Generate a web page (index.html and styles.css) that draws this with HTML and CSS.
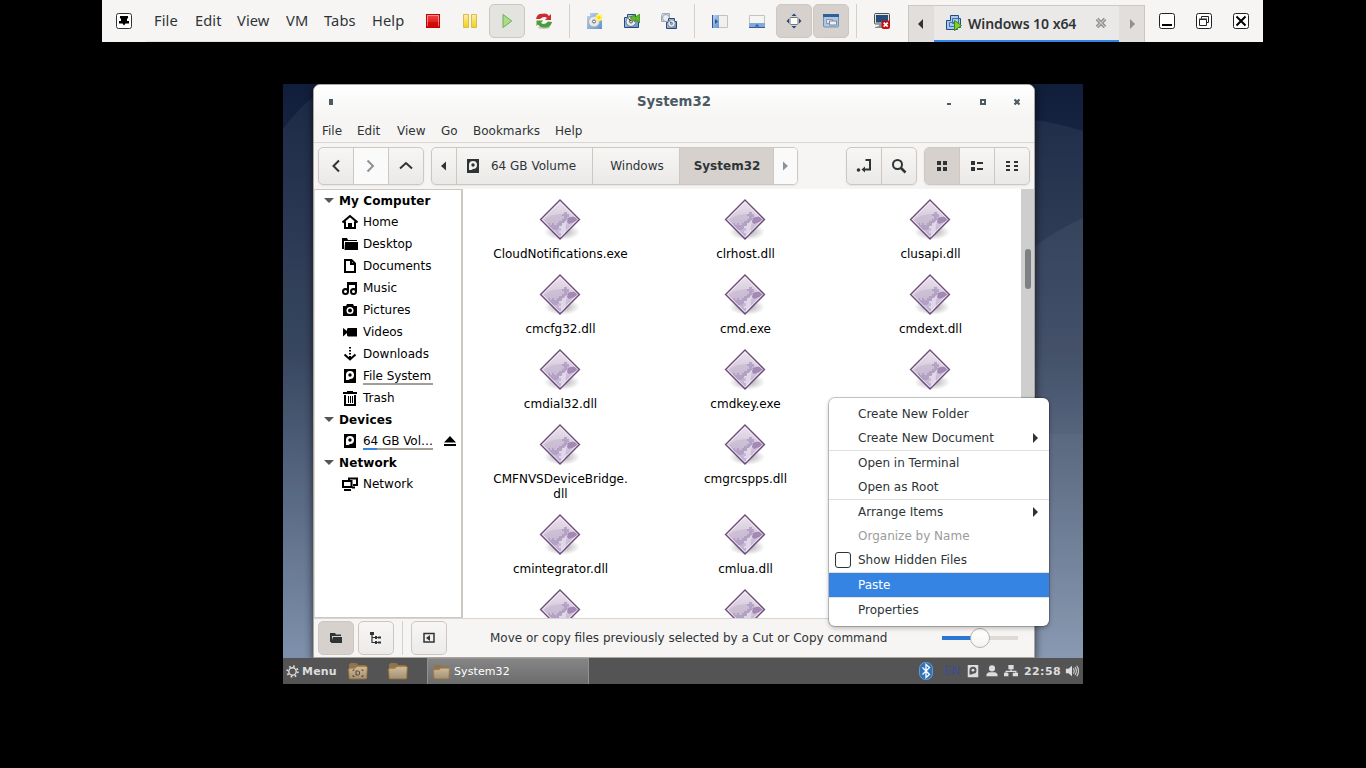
FILE: index.html
```
<!DOCTYPE html>
<html lang="en">
<head>
<meta charset="utf-8">
<title>Windows 10 x64</title>
<link rel="stylesheet" href="styles.css">
</head>
<body>
<svg class="defs" width="0" height="0">
  <defs>
    <linearGradient id="lilac" x1="0" y1="0" x2="0" y2="1"><stop offset="0" stop-color="#ece4ee"/><stop offset=".55" stop-color="#d3c6da"/><stop offset="1" stop-color="#b9abd3"/></linearGradient>
    <linearGradient id="blue" x1="0" y1="0" x2="1" y2="1"><stop offset="0" stop-color="#c4d7ec"/><stop offset="1" stop-color="#5f91cc"/></linearGradient>
    <linearGradient id="red" x1="0" y1="0" x2="0" y2="1"><stop offset="0" stop-color="#f04848"/><stop offset="1" stop-color="#cf0808"/></linearGradient>
    <linearGradient id="gold" x1="0" y1="0" x2="0" y2="1"><stop offset="0" stop-color="#fff0a0"/><stop offset="1" stop-color="#f2cf16"/></linearGradient>
    <linearGradient id="tan" x1="0" y1="0" x2="0" y2="1"><stop offset="0" stop-color="#cdbb9c"/><stop offset="1" stop-color="#a39175"/></linearGradient>
    <radialGradient id="shade"><stop offset="0" stop-color="#000" stop-opacity=".35"/><stop offset="1" stop-color="#000" stop-opacity="0"/></radialGradient>
    <clipPath id="dia"><path d="M22 2 40.500 20.500 22 39 3.500 20.500z"/></clipPath>
  </defs>
  <symbol id="exe" viewBox="0 0 44 44">
    <ellipse cx="24" cy="33" rx="18" ry="8" fill="url(#shade)"/>
    <path d="M22 1 41.500 20.500 22 40 2.500 20.500z" fill="url(#lilac)" stroke="#6d4a78" stroke-width="1.300"/>
    <g clip-path="url(#dia)">
      <path d="M6 21Q14 14 26 15l6 3-8 8H10z" fill="#c5b7cf" opacity=".6"/>
      <path d="M10 24h2v2h2v-2h2v2h3v-2h2v-2h3v-2h2v-3h-2v-2h2v-2h3v2h2v3h-2v3l-3 3-3 3-4 4h-7z" fill="#ab98bf" opacity=".75"/>
      <path d="M30 19q4-2 8-1l4 3-11 4q-4-3-1-6z" fill="#997fae" opacity=".85"/>
      <path d="M23 38v-4h-2v-2h2v-3h-2v-2h3v-3h2q2-3 4-4-3 6-2 12l-3 6z" fill="#e2d9ea" opacity=".9"/>
    </g>
    <path d="M22 3 39.500 20.500 22 38 4.500 20.500z" fill="none" stroke="#fff" stroke-opacity=".55"/>
  </symbol>
  <symbol id="drive" viewBox="0 0 16 16"><path fill="currentColor" fill-rule="evenodd" d="M2 1h12v14H2zM8 3a4 4 0 0 0-4 4v5h2.500L8 11a4 4 0 0 0 0-8z"/><circle cx="8" cy="7" r="1.700" fill="currentColor"/></symbol>
  <symbol id="folderb" viewBox="0 0 16 16"><path fill="currentColor" d="M0 2h5l1 2h9v1H2v8H0zM3 6h13v8H2.500z"/></symbol>
  <symbol id="tanfolder" viewBox="0 0 20 18"><path d="M1.500 15V3q0-1.500 1.500-1.500h5.500L10 3.500h7.500v4z" fill="#8b7558" stroke="#987039"/><path d="M.7 7.500q0-1.200 1.200-1.200h5L9 4.500h9.200q1 0 1 1l-.6 10.300q0 1-1 1H2.200q-1 0-1-1z" fill="url(#tan)" stroke="#b07c34" stroke-width=".9"/></symbol>
  <symbol id="dial" viewBox="0 0 12 12"><circle cx="6" cy="6" r="5" fill="#e7ebee" stroke="#69727c"/><circle cx="6" cy="6" r="1.500" fill="#fff" stroke="#333" stroke-width=".8"/><path d="M6 6 3.500 3" stroke="#222"/></symbol>
</svg>

<header class="vmbar">
  <svg class="pin" viewBox="0 0 16 16"><rect x=".5" y=".5" width="15" height="15" rx="2" fill="#fff" stroke="#333"/><path d="M4 3h8v2.500H11V8h2v2.500H9.500L8 12.500 6.500 10.500H3V8h2V5.500H4z"/></svg>
  <nav class="vmmenu"><span class="w41">File</span><span class="w42">Edit</span><span class="w49">View</span><span class="w38">VM</span><span class="w48">Tabs</span><span>Help</span></nav>
  <div class="group">
    <span class="slot"><svg viewBox="0 0 16 16"><rect x="1.500" y="1.500" width="13" height="13" fill="url(#red)" stroke="#c40404"/><path d="M2.500 13V2.500H13.500V13" fill="none" stroke="#ff8c8c"/><path d="M2.500 9h11v4.500h-11z" fill="#c80000" opacity=".55"/></svg></span>
    <span class="slot"><svg viewBox="0 0 16 16"><path d="M1.500 1.500h5v13h-5zM9.500 1.500h5v13h-5z" fill="url(#gold)" stroke="#d9bd4a"/></svg></span>
    <span class="slot run"><svg viewBox="0 0 16 16"><path d="M4 1.500 12.800 8 4 14.500z" fill="#aedb85" stroke="#6fae57"/></svg></span>
    <span class="slot"><svg viewBox="0 0 16 16"><ellipse cx="8" cy="14.500" rx="6" ry="1.500" fill="#0003"/><path d="M0 6Q1 0 7 .7 11 0 13 3l2-2v6H9l2-2Q8 2.500 4 6z" fill="#cf2a30"/><path d="M16 9q-1 6-8 5.500-4 0-6-3L.5 13V7.500H7L5 10q4 2.500 7-1.500z" fill="#4a9d3b"/></svg></span>
  </div>
  <i class="sep"></i>
  <div class="group">
    <span class="slot"><svg viewBox="0 0 16 16"><path d="M3 0h8v3h4v13H0V3h3z" fill="url(#blue)"/><circle cx="7" cy="8.500" r="5.500" fill="#e4e8ea" stroke="#a3abb3"/><circle cx="7" cy="8.500" r="1.500" fill="#fff" stroke="#444" stroke-width=".8"/><circle cx="12" cy="4.500" r="3.500" fill="#fff36a"/><circle cx="12" cy="4.500" r="1.600" fill="#ffd900"/></svg></span>
    <span class="slot"><svg viewBox="0 0 16 16"><path d="M3.500 1.500h8v3h3v10h-14v-10h3z" fill="url(#blue)" stroke="#204a87"/><use href="#dial" x="1" y="2.500" width="12" height="12"/><path d="M6 5 11 1v3l5-3v9l-5-3v2z" fill="#5db52d" stroke="#347c16" stroke-width=".6"/></svg></span>
    <span class="slot"><svg viewBox="0 0 16 16"><path d="M1.500.5h7v8h-8v-6z" fill="#d7e1ec" stroke="#9bacbf"/><circle cx="5" cy="5" r="3.500" fill="#eceff1" stroke="#99a1aa"/><path d="M7.500 5.500h6v3h2v7h-10v-6h2z" fill="url(#blue)" stroke="#204a87"/><use href="#dial" x="6" y="6" width="9" height="9"/></svg></span>
  </div>
  <i class="sep"></i>
  <div class="group">
    <span class="slot"><svg viewBox="0 0 16 16"><path d="M.5 2.500h15v12H.5z" fill="#f0f0ee" stroke="#c2c2bf"/><path d="M0 2h7v13H0z" fill="url(#blue)"/><path d="M0 2h1v13H0zM3 6l3 2.500L3 11z" fill="#27569b"/></svg></span>
    <span class="slot"><svg viewBox="0 0 16 16"><path d="M.5 2.500h15v12H.5z" fill="#f5f5f3" stroke="#c2c2bf"/><path d="M0 10h16v5H0z" fill="#83a9d6"/><path d="M0 14h16v1H0zM5.500 13.500 8 11l2.500 2.500z" fill="#315f9f"/></svg></span>
    <span class="slot on"><svg viewBox="0 0 16 16"><rect x="4" y="4.500" width="8" height="7" rx="1" fill="#fff" stroke="#777"/><path d="M5.500 3 8 .5 10.500 3zM5.500 13 8 15.500 10.500 13zM3 5.500.5 8 3 10.500zM13 5.500 15.500 8 13 10.500z" fill="#204a87"/></svg></span>
    <span class="slot on"><svg viewBox="0 0 16 16"><rect x=".5" y="1.500" width="15" height="12.500" rx="1" fill="#abc7e5" stroke="#6f8fb5"/><path d="M0 1h16v3H0z" fill="#315f99"/><path d="M3.500 6.500h6v4h-6z" fill="#dde5ed" stroke="#8d9aa8"/><path d="M6.500 8h7v4h-7z" fill="#eef1f4" stroke="#7c8792"/></svg></span>
  </div>
  <i class="sep"></i>
  <div class="group"><span class="slot"><svg viewBox="0 0 16 16"><rect x=".5" y=".5" width="15" height="10.500" rx="1" fill="#e0e2db" stroke="#4d524d"/><path d="M2 2h12v7.500H2z" fill="#274b7d"/><path d="M5 11h4v2h3v2H1v-1l4-1z" fill="#8a8f88"/><rect x="7.500" y="7.500" width="8.500" height="8.500" rx="2" fill="#c50b12"/><path d="M9.700 9.700l4 4M13.700 9.700l-4 4" stroke="#fff" stroke-width="1.700"/></svg></span></div>
  <div class="tabs">
    <span class="arrow"><svg viewBox="0 0 26 36"><path d="M9 18l5-5v10z" fill="#2e3436"/></svg></span>
    <div class="tab">
      <svg viewBox="0 0 16 16"><path d="M4.500.5h8v3h2v9h-3v2h-11v-9h4z" fill="#a9c9ec" stroke="#204a87"/><path d="M3.500 7.500h7v4h-7zM6.500 3.500h6v5h-6z" fill="none" stroke="#3f71ad"/><path d="M8.500 5.500 15.500 10.500 8.500 15.500z" fill="#80cf2a" stroke="#3c8d0b"/></svg>
      <b>Windows 10 x64</b>
      <svg class="tabx" viewBox="0 0 12 12"><path d="M2 2l8 8M10 2l-8 8" stroke="#858884" stroke-width="3.600"/><path d="M2 2l8 8M10 2l-8 8" stroke="#c9c8c4" stroke-width="1.200"/></svg>
    </div>
    <span class="arrow"><svg viewBox="0 0 26 36"><path d="M11 13l5 5-5 5z" fill="#8d9091"/></svg></span>
  </div>
  <div class="group wins">
    <span class="slot"><svg viewBox="0 0 16 16"><rect x=".5" y=".5" width="15" height="15" rx="2" fill="#fff" stroke="#222"/><path d="M3 11h10v2H3z"/></svg></span>
    <span class="slot"><svg viewBox="0 0 16 16"><rect x=".5" y=".5" width="15" height="15" rx="2" fill="#fff" stroke="#222"/><path d="M5.500 5.500v-2h7v6h-2M3.500 6.500h7v6h-7zM3 6h8" fill="none" stroke="#222"/></svg></span>
    <span class="slot"><svg viewBox="0 0 16 16"><rect x=".5" y=".5" width="15" height="15" rx="2" fill="#fff" stroke="#222"/><path d="M3.500 3.500l9 9M12.500 3.500l-9 9" stroke="#000" stroke-width="2"/></svg></span>
  </div>
</header>

<main class="desktop">
  <svg class="wall" viewBox="0 0 800 574" preserveAspectRatio="none"><path d="M0 45Q15 25 31 12V574H0z" fill="#fff" opacity=".05"/><path d="M751 36Q775 39 800 47V574H751z" fill="#fff" opacity=".06"/><path d="M751 163Q775 145 800 134V574H751z" fill="#fff" opacity=".05"/><path d="M751 350h49v224H751z" fill="#fff" opacity=".03"/></svg>
  <section class="win">
    <div class="title"><i class="mini"></i><b>System32</b>
      <svg class="ctl" viewBox="0 0 76 12"><path d="M3 7h4v2H3z" fill="#4c5a63"/><path d="M37 4h4v4h-4z" fill="none" stroke="#4c5a63" stroke-width="2"/><path d="M70.500 3.500l5 5M75.500 3.500l-5 5" stroke="#4c5a63" stroke-width="2.200"/></svg>
    </div>
    <nav class="menubar"><span class="m1">File</span><span class="m2">Edit</span><span class="m3">View</span><span class="m4">Go</span><span class="m5">Bookmarks</span><span>Help</span></nav>
    <div class="tools">
      <div class="btns"><span class="b35"><svg viewBox="0 0 16 16"><path d="M11 2.500 5.500 8l5.500 5.500" class="ln"/></svg></span><span class="b35 off"><svg viewBox="0 0 16 16"><path d="M4.500 2.500 10 8l-5.500 5.500" class="ln grey"/></svg></span><span class="b35"><svg viewBox="0 0 16 16"><path d="M2 10.500 8 5l6 5.500" class="ln"/></svg></span></div>
      <div class="btns path"><span class="p1"><svg viewBox="0 0 16 16"><path d="M5 8l5-4.500v9z" fill="#2e3436"/></svg></span><span class="p2"><svg viewBox="0 0 16 16"><use href="#drive"/></svg><em>64 GB Volume</em></span><span class="p3">Windows</span><span class="p4 sel"><b>System32</b></span><span class="p5 off"><svg viewBox="0 0 16 16"><path d="M5 3.500l5 4.500-5 4.500z" fill="#8f9293"/></svg></span></div>
      <div class="btns right"><span class="b34"><svg viewBox="0 0 16 16"><path d="M9.500 2H14v9.500H9" class="ln"/><path d="M5.500 11.500 9 8.500v6z" fill="#2e3436"/><circle cx="2.500" cy="12" r="1.800" fill="#2e3436"/></svg></span><span class="b35"><svg viewBox="0 0 16 16"><circle cx="6.500" cy="6.500" r="4.500" class="ln"/><path d="M10 10l4.500 4.500" class="ln thick"/></svg></span></div>
      <div class="btns views"><span class="b35 sel"><svg viewBox="0 0 16 16"><path d="M3 3h4v4H3zM9 3h4v4H9zM3 9h4v4H3zM9 9h4v4H9z" fill="#2e3436"/></svg></span><span class="b35"><svg viewBox="0 0 16 16"><path d="M2 3h4v4H2zM2 9h4v4H2zM8 4h6v2H8zM8 10h6v2H8z" fill="#2e3436"/></svg></span><span class="b35"><svg viewBox="0 0 16 16"><path d="M2 3h4v2H2zM2 7h4v2H2zM2 11h4v2H2zM10 3h4v2h-4zM10 7h4v2h-4zM10 11h4v2h-4z" fill="#2e3436"/></svg></span></div>
    </div>
    <div class="body">
      <aside class="side">
        <h3>My Computer</h3>
        <p><svg viewBox="0 0 16 16"><path d="M.5 8.500 8 2l7.500 6.500M3 7.500V14h10V7.500" fill="none" stroke="#000" stroke-width="2"/><path d="M6 9h4v5H6z"/></svg>Home</p>
        <p><svg viewBox="0 0 16 16"><use href="#folderb"/></svg>Desktop</p>
        <p><svg viewBox="0 0 16 16"><path d="M3 2h6.500L13 5.500V14H3zM9 2v4h4" fill="none" stroke="#000" stroke-width="2"/></svg>Documents</p>
        <p><svg viewBox="0 0 16 16"><path d="M6 11V3h8v8" fill="none" stroke="#000" stroke-width="2"/><path d="M6 4h8v1H6z"/><circle cx="3.500" cy="11.500" r="2.500" fill="none" stroke="#000" stroke-width="2"/><circle cx="11.500" cy="11.500" r="2.500" fill="none" stroke="#000" stroke-width="2"/></svg>Music</p>
        <p><svg viewBox="0 0 16 16"><path fill-rule="evenodd" d="M1 4h3l1-2h6l1 2h3v10H1zM8 5a3.500 3.500 0 1 0 0 7 3.500 3.500 0 0 0 0-7z"/><circle cx="8" cy="8.500" r="2"/></svg>Pictures</p>
        <p><svg viewBox="0 0 16 16"><path d="M1 4l4 3V5l1-1h9v8.500H6l-1-1V9l-4 3.500z"/></svg>Videos</p>
        <p><svg viewBox="0 0 16 16"><path d="M7 1h2v1.500H7zM7 4h2v1.500H7zM7 7h2v1.500H7z"/><path d="M8 10v4M2.500 8.500 8 13.500l5.500-5" fill="none" stroke="#000" stroke-width="2"/></svg>Downloads</p>
        <p><svg viewBox="0 0 16 16"><use href="#drive"/></svg><u>File System</u></p>
        <p><svg viewBox="0 0 16 16"><path d="M1 2h4V1h6v1h4v2H1zM2 5h2v9h8V5h2v11H2zM6 6h1v7H6zM8 6h1v7H8zM10 6h1v7h-1z"/></svg>Trash</p>
        <h3>Devices</h3>
        <p><svg viewBox="0 0 16 16"><use href="#drive"/></svg><u class="used">64 GB Vol…</u><svg class="eject" viewBox="0 0 12 12"><path d="M6 1l6 6.500H0zM0 9h12v2H0z"/></svg></p>
        <h3>Network</h3>
        <p><svg viewBox="0 0 16 16"><path d="M1 5h8.500v6H1zM2 14h7M7 4V2.500h8V9h-4M10 11.500h3" fill="none" stroke="#000" stroke-width="2"/></svg>Network</p>
      </aside>
      <div class="files">
        <div class="row"><figure><svg><use href="#exe"/></svg>CloudNotifications.exe</figure><figure><svg><use href="#exe"/></svg>clrhost.dll</figure><figure><svg><use href="#exe"/></svg>clusapi.dll</figure></div>
        <div class="row"><figure><svg><use href="#exe"/></svg>cmcfg32.dll</figure><figure><svg><use href="#exe"/></svg>cmd.exe</figure><figure><svg><use href="#exe"/></svg>cmdext.dll</figure></div>
        <div class="row"><figure><svg><use href="#exe"/></svg>cmdial32.dll</figure><figure><svg><use href="#exe"/></svg>cmdkey.exe</figure><figure><svg><use href="#exe"/></svg></figure></div>
        <div class="row tall"><figure><svg><use href="#exe"/></svg>CMFNVSDeviceBridge.<br>dll</figure><figure><svg><use href="#exe"/></svg>cmgrcspps.dll</figure></div>
        <div class="row"><figure><svg><use href="#exe"/></svg>cmintegrator.dll</figure><figure><svg><use href="#exe"/></svg>cmlua.dll</figure></div>
        <div class="row"><figure><svg><use href="#exe"/></svg></figure><figure><svg><use href="#exe"/></svg></figure></div>
      </div>
      <div class="scroll"><i></i></div>
    </div>
    <footer class="status">
      <span class="sb sel"><svg viewBox="0 0 16 16"><path fill="#2e3436" d="M2 3h5l1 1.500h5V6H4v6H2zM5 7h9v6H3z"/></svg></span>
      <span class="sb"><svg viewBox="0 0 16 16"><path d="M4 3v9.500h7M4 7.500h7" fill="none" stroke="#2e3436" stroke-width="1.200"/><path d="M2 2h4v3H2zM7 6h2v3H7zM10 6.500h3v2h-3zM7 11h2v3H7zM10 11.500h3v2h-3z" fill="#2e3436"/></svg></span>
      <i class="vline"></i>
      <span class="sb"><svg viewBox="0 0 16 16"><path d="M3 3.500h10v8.500H3z" fill="none" stroke="#2e3436" stroke-width="1.500"/><path d="M5 8l4-3v6z" fill="#2e3436"/></svg></span>
      <span class="msg">Move or copy files previously selected by a Cut or Copy command</span>
      <span class="slider"><i></i></span>
    </footer>
  </section>

  <div class="ctx">
    <div>Create New Folder</div><div class="sub">Create New Document</div><hr>
    <div>Open in Terminal</div><div>Open as Root</div><hr>
    <div class="sub">Arrange Items</div><div class="dis">Organize by Name</div><div class="check">Show Hidden Files</div><hr>
    <div class="hot">Paste</div><hr><div>Properties</div>
  </div>

  <div class="panel">
    <svg class="gear" viewBox="0 0 14 14"><circle cx="7" cy="7" r="4" fill="none" stroke="#ddd" stroke-width="1.500"/><circle cx="7" cy="7" r="5.700" fill="none" stroke="#ddd" stroke-width="2" stroke-dasharray="1.800 2.677"/></svg>
    <b class="start">Menu</b>
    <svg class="f1" viewBox="0 0 20 18"><use href="#tanfolder"/><path d="M5 9V8h1.500M13.500 8H15v1M5 13v1.500h1.500M13.500 14.500H15V13M8 9h2.500l1 1v2l-1 1H8z" fill="none" stroke="#574630"/></svg>
    <svg class="f2" viewBox="0 0 20 18"><use href="#tanfolder"/></svg>
    <div class="task"><svg viewBox="0 0 20 18"><use href="#tanfolder"/></svg>System32</div>
    <div class="tray">
      <svg class="bt" viewBox="0 0 14 18"><rect x=".5" y=".5" width="13" height="17" rx="6" fill="#3272bb" stroke="#659bd0"/><path d="M3.500 5.500l7 7-3.500 3V2.500l3.500 3-7 7" fill="none" stroke="#fff" stroke-width="1.300"/></svg>
      <span class="en">EN</span>
      <svg class="tr light" viewBox="0 0 16 16"><use href="#drive"/></svg>
      <svg class="tr" viewBox="0 0 16 16"><circle cx="8" cy="5" r="3.500" fill="#ddd"/><path d="M1.500 14q0-4.500 4-4.500h5q4 0 4 4.500z" fill="#ddd"/></svg>
      <svg class="tr" viewBox="0 0 16 16"><path d="M5 1h6v5H5zM0 10h5v4H0zM10 10h6v4h-6z" fill="#ddd"/><path d="M8 6v2M2.500 10V8.500h11V10" stroke="#ddd" stroke-width="1.500" fill="none"/></svg>
      <b class="time">22:58</b>
      <svg class="tr vol" viewBox="0 0 16 16"><path d="M1 5.500h3L8 2v12l-4-3.500H1z" fill="#ddd"/><path d="M9.500 5q2 3 0 6M11.500 3.500q3 4.500 0 9M13.500 2q4 6 0 12" fill="none" stroke="#ccc" stroke-width="1.300"/></svg>
    </div>
  </div>
</main>
</body>
</html>
```
FILE: styles.css
```
* { box-sizing: border-box; }
body { margin: 0; width: 1366px; height: 768px; background: #000; overflow: hidden; font: 12px "DejaVu Sans", sans-serif; color: #2e3436; }
svg { display: block; flex: none; }
.defs { position: absolute; }
b { font-weight: bold; }
em { font-style: normal; }

.vmbar { margin-left: 102px; width: 1161px; height: 42px; background: #f6f5f4; display: flex; align-items: center; font: 14.67px "Noto Sans", sans-serif; }
.pin { width: 16px; height: 16px; margin-left: 14px; }
.vmmenu { width: 279px; padding-left: 22px; display: flex; flex: none; height: 42px; line-height: 41px; background: linear-gradient(#e5e3e1, #e5e3e1) 14px 41px / 265px 1px no-repeat; margin-right: 2px; }
.vmmenu span { white-space: nowrap; flex: none; letter-spacing: .1px; }
.w41 { width: 41px; } .w42 { width: 42px; } .w49 { width: 49px; } .w38 { width: 38px; } .w48 { width: 48px; }
.group { display: flex; flex: none; }
.group:nth-of-type(1) { margin-left: 2px; }
.slot { width: 36px; height: 34px; margin-right: 1px; display: flex; align-items: center; justify-content: center; border: 1px solid transparent; border-radius: 5px; }
.slot svg { width: 16px; height: 16px; }
.slot.run { background: #e3e3df; border-color: #cdc7c2; }
.slot.on { background: #d6d1cd; border-color: #cdc7c2; }
.sep { width: 1px; height: 34px; background: #d5d0cc; margin: 0 7px 0 6px; flex: none; }
.tabs { display: flex; margin: 5px 4px 0 7px; width: 237px; height: 37px; border: 1px solid #cdc7c2; border-bottom: 0; background: #e1dedb; flex: none; }
.arrow { width: 25px; flex: none; }
.arrow svg { width: 26px; height: 36px; }
.tab { flex: 1; background: #ebe9e7; border-bottom: 2px solid #3584e4; display: flex; align-items: center; padding-left: 12px; font-size: 14px; }
.tab b { width: 109px; margin: 0 18px 0 6px; white-space: nowrap; letter-spacing: -.05px; font-weight: 600; }
.tab > svg { width: 16px; height: 16px; }
.tab > svg.tabx { width: 12px; height: 12px; }

.desktop { position: absolute; left: 283px; top: 84px; width: 800px; height: 600px; background: linear-gradient(#101e3b, #2e3d58 45%, #778aa6 95%); overflow: hidden; }
.wall { position: absolute; left: 0; top: 0; width: 800px; height: 574px; }
.win { position: absolute; left: 30px; top: 0; width: 722px; height: 574px; border: 1px solid #aaa59f; border-radius: 7px 7px 0 0; background: #f6f5f4; box-shadow: 0 3px 9px #000a; overflow: hidden; display: flex; flex-direction: column; }
.title { height: 32px; background: linear-gradient(#fff, #f6f5f4); display: flex; align-items: center; color: #4c5a63; font-size: 14px; flex: none; }
.mini { width: 4px; height: 6px; background: #4c5a63; margin: 1px 0 0 15px; }
.title b { flex: 1; text-align: center; padding-left: 71px; font-size: 13.33px; }
.ctl { width: 76px; height: 12px; margin: 1px 14px 0 0; }
.menubar { height: 26px; line-height: 29px; border-bottom: 1px solid #d9d6d2; padding-left: 8px; display: flex; flex: none; }
.m1 { width: 35px; } .m2 { width: 40px; } .m3 { width: 44px; } .m4 { width: 32px; } .m5 { width: 82px; }
.tools { height: 46px; padding: 4px 4px 0; display: flex; flex: none; }
.btns { height: 38px; display: flex; border: 1px solid #cdc7c2; border-radius: 5px; overflow: hidden; background: linear-gradient(#f7f6f5, #ebe9e7); box-shadow: 0 1px 2px #0001; flex: none; }
.btns > span { display: flex; align-items: center; justify-content: center; border-left: 1px solid #cdc7c2; }
.btns > span:first-child { border-left: 0; }
.btns svg { width: 16px; height: 16px; }
.b35 { width: 35px; } .b34, .b35:first-child { width: 34px; }
.off { background: #fbfafa; }
.btns > .sel, .sb.sel { background: #d6d1cd; }
.ln { fill: none; stroke: #2e3436; stroke-width: 2; }
.ln.grey { stroke: #8f9293; } .ln.thick { stroke-width: 2.500; }
.path { margin-left: 7px; }
.p1 { width: 24px; } .p2 { width: 136px; gap: 10px; padding-right: 8px; } .p3 { width: 87px; padding-left: 2px; } .p4 { width: 94px; padding-left: 1px; } .p5 { width: 24px; }
.right { margin-left: auto; } .views { margin-left: 7px; }
.body { height: 429px; display: flex; background: #fff; color: #000; flex: none; }
.side { width: 149px; border: 1px solid #cdc7c2; border-left-color: #dedad6; border-right-width: 2px; flex: none; }
.side h3 { margin: 0; height: 21px; padding: 2px 0 0 24px; font-size: 12px; line-height: 19px; letter-spacing: .1px; display: flex; align-items: center; }
.side h3::before { content: ""; width: 10px; height: 5px; background: #555; clip-path: polygon(0 0, 100% 0, 50% 100%); margin: -2px 5px 0 -15px; }
.side p { margin: 0; height: 22px; padding-left: 27px; display: flex; align-items: center; gap: 5px; white-space: nowrap; }
.side p > svg { width: 16px; height: 16px; }
.side u { text-decoration: none; width: 70px; height: 18px; line-height: 18px; border-bottom: 2px solid #a39e98; letter-spacing: -.05px; }
.side u.used { border-image: linear-gradient(90deg, #3584e4 22%, #a39e98 22%) 2; border-width: 0 0 2px; border-style: solid; }
.side p > svg.eject { width: 12px; height: 12px; margin-left: 6px; }
.files { flex: 1; height: 429px; overflow: hidden; padding: 10px 0 0 5px; }
.row { display: flex; height: 75px; }
.row.tall { height: 90px; }
.files figure { margin: 0; width: 185px; display: flex; flex-direction: column; align-items: center; text-align: center; line-height: 15px; flex: none; }
.files figure svg { width: 44px; height: 44px; margin: 0 2px 4px 0; }
.scroll { width: 13px; background: #cecece; padding: 60px 3px 0 4px; }
.scroll i { display: block; width: 6px; height: 40px; border-radius: 3px; background: #7e8182; }
.status { height: 39px; border-top: 1px solid #d9d6d2; display: flex; align-items: center; padding: 0 16px 0 4px; flex: none; }
.sb { width: 36px; height: 34px; border: 1px solid #cdc7c2; border-radius: 5px; display: flex; align-items: center; justify-content: center; background: linear-gradient(#f7f6f5, #edebe9); margin-right: 4px; flex: none; }
.sb svg { width: 16px; height: 16px; }
.vline { width: 1px; height: 34px; background: #d5d0cc; margin: 0 8px 0 4px; }
.msg { margin-left: 39px; white-space: nowrap; }
.slider { margin-left: auto; width: 76px; height: 20px; display: flex; align-items: center; justify-content: center; background: linear-gradient(90deg, #2a76d2 50%, #dedad6 50%) center / 76px 4px no-repeat; }
.slider i { width: 20px; height: 20px; border: 1px solid #b9b2ab; border-radius: 50%; background: linear-gradient(#fff, #f4f3f2); }

.ctx { position: absolute; left: 546px; top: 314px; width: 220px; height: 228px; border-radius: 6px; background: #fff; padding: 4px 0; box-shadow: 0 0 0 1px #0003, 0 2px 5px #0004; }
.ctx div { height: 24px; line-height: 24px; padding-left: 29px; display: flex; align-items: center; }
.ctx hr { margin: 0; border: 0; height: 1px; background: #e1dedb; }
.ctx .sub::after { content: ""; margin: 0 11px 0 auto; width: 5px; height: 10px; background: #2e3436; clip-path: polygon(0 0, 100% 50%, 0 100%); }
.ctx .dis { color: #9a9c9c; }
.ctx .hot { background: #3584e4; color: #fff; }
.ctx .check { padding-left: 6px; }
.ctx .check::before { content: ""; box-sizing: border-box; flex: none; width: 16px; height: 16px; border: 1px solid #2e3436; border-radius: 3px; margin-right: 7px; }

.panel { position: absolute; left: 0; top: 574px; width: 800px; height: 26px; background: #545454; display: flex; align-items: center; color: #ddd; font-size: 11px; }
.gear { width: 13px; height: 13px; margin-left: 3px; }
.start { width: 35px; margin: 0 11px 0 3px; letter-spacing: .2px; }
.f1, .f2 { width: 20px; height: 18px; }
.f2 { margin: 0 19px 0 20px; }
.task { width: 162px; height: 26px; border: 1px solid #909090; border-bottom: 0; background: linear-gradient(#858585, #6c6c6c); display: flex; align-items: center; gap: 4px; padding-left: 5px; color: #fff; letter-spacing: .1px; }
.task svg { width: 17px; height: 16px; }
.tray { margin-left: auto; display: flex; align-items: center; padding-right: 4px; }
.bt { width: 14px; height: 18px; margin-right: 11px; }
.en { width: 17px; color: #414b94; margin-right: 5px; font-size: 12px; letter-spacing: -.5px; }
.tr { width: 14px; height: 14px; margin-right: 5px; }
.light { color: #ddd; }
.time { width: 37px; letter-spacing: .4px; margin: 0 4px 0 1px; }
.vol { margin-right: 0; }
```
